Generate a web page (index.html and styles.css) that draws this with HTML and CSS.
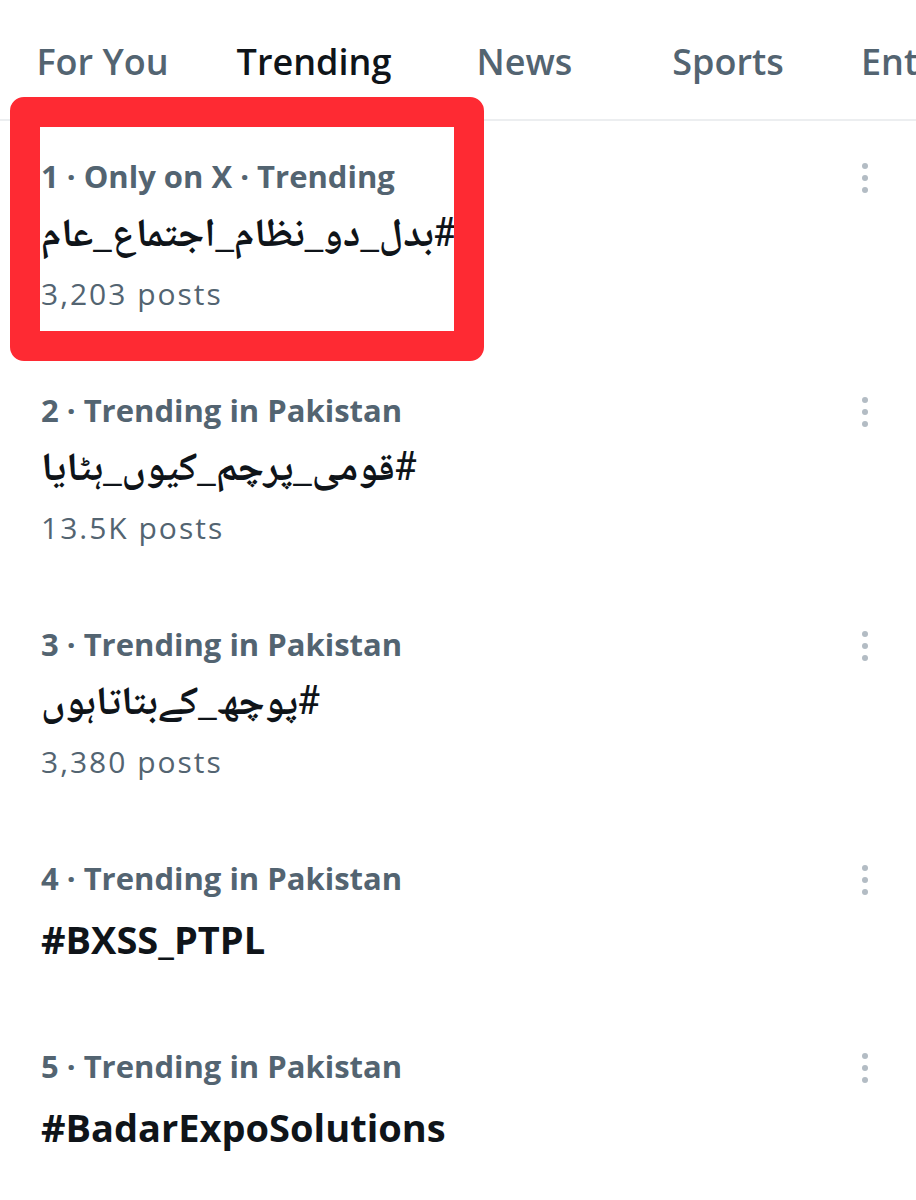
FILE: index.html
```html
<!DOCTYPE html>
<html>
<head>
<meta charset="utf-8">
<link rel="stylesheet" href="styles.css">
</head>
<body>
<div class="page">
  <nav class="tabs">
    <div class="tab">For You</div>
    <div class="tab active">Trending</div>
    <div class="tab">News</div>
    <div class="tab">Sports</div>
    <div class="tab last">Entertainment</div>
  </nav>
  <div class="list">
    <div class="trend">
      <div class="body">
        <div class="meta">1 · Only on X · Trending</div>
        <div class="tag"><span class="rtl" dir="rtl">#بدل_دو_نظام_اجتماع_عام</span></div>
        <div class="posts">3,203 posts</div>
      </div>
      <div class="more"><span></span><span></span><span></span></div>
    </div>
    <div class="trend">
      <div class="body">
        <div class="meta">2 · Trending in Pakistan</div>
        <div class="tag"><span class="rtl" dir="rtl">#قومی_پرچم_کیوں_ہٹایا</span></div>
        <div class="posts">13.5K posts</div>
      </div>
      <div class="more"><span></span><span></span><span></span></div>
    </div>
    <div class="trend">
      <div class="body">
        <div class="meta">3 · Trending in Pakistan</div>
        <div class="tag"><span class="rtl" dir="rtl">#پوچھ_کےبتاتاہوں</span></div>
        <div class="posts">3,380 posts</div>
      </div>
      <div class="more"><span></span><span></span><span></span></div>
    </div>
    <div class="trend">
      <div class="body">
        <div class="meta">4 · Trending in Pakistan</div>
        <div class="tag latin">#BXSS_PTPL</div>
      </div>
      <div class="more"><span></span><span></span><span></span></div>
    </div>
    <div class="trend">
      <div class="body">
        <div class="meta">5 · Trending in Pakistan</div>
        <div class="tag latin">#BadarExpoSolutions</div>
      </div>
      <div class="more"><span></span><span></span><span></span></div>
    </div>
  </div>
  <div class="highlight"></div>
</div>
</body>
</html>
```
FILE: styles.css
```css
html, body {
  margin: 0;
  padding: 0;
  background: #ffffff;
}
.page {
  position: relative;
  width: 916px;
  height: 1200px;
  overflow: hidden;
  font-family: "Open Sans", "DejaVu Sans", sans-serif;
}
.tabs {
  display: grid;
  grid-template-columns: 205px 218px 203px 204px 1fr;
  height: 121px;
  border-bottom: 2px solid #eceef0;
  box-sizing: border-box;
  padding-top: 27px;
  font-family: "Open Sans", "Liberation Sans", sans-serif;
  font-weight: 600;
  font-size: 36px;
  color: #536471;
  overflow: hidden;
}
.tab {
  text-align: center;
  white-space: nowrap;
  line-height: 70px;
}
.tab.active {
  color: #0f1419;
}
.tab.last {
  text-align: left;
  padding-left: 31px;
}
.trend {
  display: flex;
  justify-content: space-between;
  padding: 28px 0 38px 41px;
}
.meta {
  font-size: 31px;
  font-weight: 700;
  color: #536471;
  line-height: 54px;
  white-space: nowrap;
}
.tag {
  font-family: "Noto Naskh Arabic", "Noto Sans Arabic", "DejaVu Sans", sans-serif;
  font-size: 40px;
  font-weight: 700;
  color: #0f1419;
  line-height: 68px;
  white-space: nowrap;
}
.tag.latin {
  font-family: "Open Sans", sans-serif;
  font-size: 38px;
  font-weight: 700;
}
.rtl {
  unicode-bidi: isolate;
}
.posts {
  font-size: 30px;
  letter-spacing: 2px;
  color: #536471;
  line-height: 46px;
}
.more {
  display: flex;
  flex-direction: column;
  gap: 6px;
  padding: 14px 48px 0 0;
}
.more span {
  width: 6px;
  height: 6px;
  border-radius: 50%;
  background: #b3bcc4;
}
.highlight {
  position: absolute;
  left: 10px;
  top: 97px;
  width: 474px;
  height: 264px;
  box-sizing: border-box;
  border: 30px solid #fe2a33;
  border-radius: 14px;
}
```
